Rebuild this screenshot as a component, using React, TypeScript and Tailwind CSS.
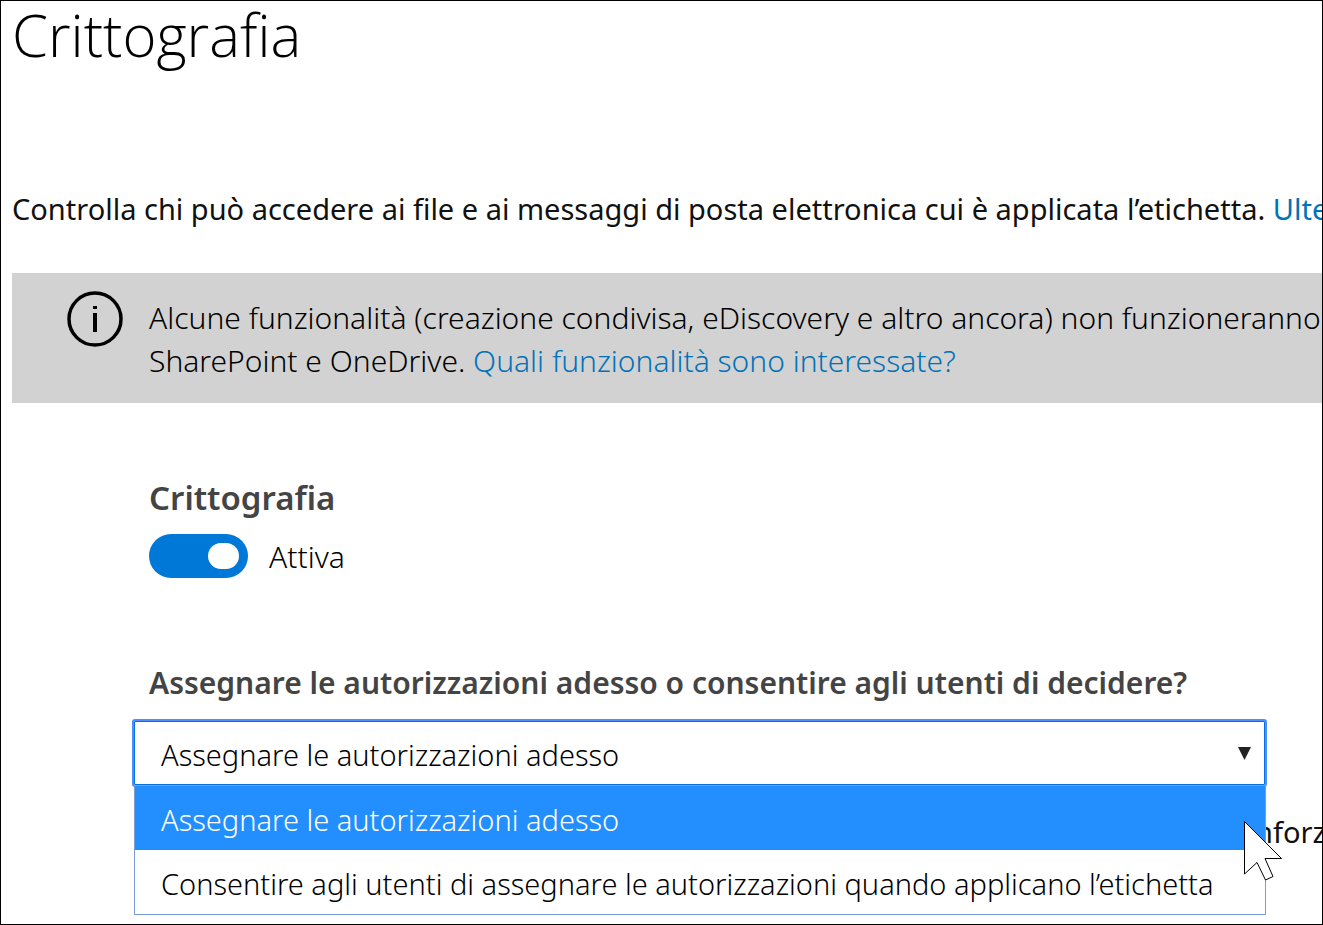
import { useState } from "react";

const OPTIONS = [
  "Assegnare le autorizzazioni adesso",
  "Consentire agli utenti di assegnare le autorizzazioni quando applicano l’etichetta",
];

function InfoIcon() {
  return (
    <svg className="h-14 w-14 shrink-0" viewBox="0 0 56 56" fill="none" aria-hidden="true">
      <circle cx="28" cy="28" r="26" stroke="#000" strokeWidth="3.5" />
      <rect x="26" y="15" width="4" height="3" fill="#000" />
      <rect x="26" y="22" width="4" height="19" fill="#000" />
    </svg>
  );
}

function Pointer() {
  return (
    <svg
      className="pointer-events-none absolute top-[101px] -right-4 z-20 h-[62px] w-[40px]"
      viewBox="0 0 40 62"
      aria-hidden="true"
    >
      <path
        d="M1.5 1.5V54L14 42.5L22.5 60L30 56.5L22 38.5H38.500Z"
        fill="#fff"
        stroke="#000"
        strokeWidth="1"
      />
    </svg>
  );
}

function Toggle({ on, onChange }: { on: boolean; onChange: (v: boolean) => void }) {
  return (
    <div className="mt-[14px] flex items-center gap-[21px]">
      <button
        type="button"
        role="switch"
        aria-checked={on}
        aria-labelledby="encryption-title"
        onClick={() => onChange(!on)}
        className={
          on
            ? "flex h-11 w-[99px] items-center justify-end rounded-full bg-[#0078d7] px-[9px]"
            : "flex h-11 w-[99px] items-center justify-start rounded-full bg-[#8a8a8a] px-[9px]"
        }
      >
        <span className="h-[26px] w-[31px] rounded-full bg-white" />
      </button>
      <span className="pt-0.5 text-[30px]">{on ? "Attiva" : "Disattivata"}</span>
    </div>
  );
}

function PermissionSelect() {
  const [choice, setChoice] = useState(0);
  return (
    <div className="relative mt-4">
      <div className="relative flex items-center">
        <select
          id="permissions"
          value={choice}
          onChange={(e) => setChoice(Number(e.target.value))}
          className="h-[68px] w-full appearance-none rounded-[3px] border-2 border-[#4a90ff] bg-white pt-1 pl-[27px] text-[29px] font-light text-black ring-1 ring-[#0a6fe0] outline-none ring-inset"
        >
          {OPTIONS.map((o, i) => (
            <option key={o} value={i}>
              {o}
            </option>
          ))}
        </select>
        <svg
          className="pointer-events-none absolute right-4 h-[13px] w-[13px]"
          viewBox="0 0 13 13"
          aria-hidden="true"
        >
          <path d="M0 0H13L6.500 13Z" fill="#222" />
        </svg>
      </div>
      <ul
        role="listbox"
        aria-labelledby="permissions-label"
        className="absolute top-[66px] right-px left-0.5 z-10 border border-[#7a9bd6] bg-white"
      >
        {OPTIONS.map((o, i) => (
          <li
            key={o}
            role="option"
            aria-selected={i === choice}
            onClick={() => setChoice(i)}
            className={
              i === choice
                ? "flex h-16 items-center bg-[#238fff] pt-1 pl-[26px] text-white"
                : "flex h-16 items-center bg-white pt-1 pl-[26px]"
            }
          >
            {o}
          </li>
        ))}
      </ul>
      <Pointer />
    </div>
  );
}

export default function App() {
  const [on, setOn] = useState(true);
  return (
    <main className="min-h-screen overflow-hidden border border-black bg-white pl-[11px] font-['Noto_Sans','Open_Sans',sans-serif] text-[29px] leading-10 font-light whitespace-nowrap text-black">
      <h1 className="font-['Open_Sans','Noto_Sans',sans-serif] text-[58px] leading-[68px]">
        Crittografia
      </h1>
      <p className="mt-[120px] font-normal text-[#111]">
        Controlla chi può accedere ai file e ai messaggi di posta elettronica cui è applicata l’etichetta.{" "}
        <a href="#info" className="text-[#0072b8]">
          Ulteriori informazioni
        </a>
      </p>

      <section className="mt-11 flex items-start gap-[26px] bg-[#d2d2d2] pt-[18px] pb-[21px] pl-[55px]">
        <InfoIcon />
        <p className="pt-[5px] text-[30px] leading-[43px]">
          Alcune funzionalità (creazione condivisa, eDiscovery e altro ancora) non funzioneranno
          <br />
          SharePoint e OneDrive.{" "}
          <a href="#features" className="text-[#0072b8]">
            Quali funzionalità sono interessate?
          </a>
        </p>
      </section>

      <section className="mt-[73px] pl-[137px]">
        <h2 id="encryption-title" className="text-[33px] leading-[44px] font-semibold text-[#444]">
          Crittografia
        </h2>
        <Toggle on={on} onChange={setOn} />
      </section>

      <section className="mt-[85px] pr-[55px] pl-[120px]">
        <label
          id="permissions-label"
          htmlFor="permissions"
          className="block pl-[17px] text-[30px] font-semibold text-[#444]"
        >
          Assegnare le autorizzazioni adesso o consentire agli utenti di decidere?
        </label>
        <PermissionSelect />
        <div className="mt-[25px] -mr-[55px] flex h-10 justify-end overflow-hidden">
          <p className="w-[67px] font-normal text-[#111]">nforzata</p>
        </div>
      </section>
    </main>
  );
}
